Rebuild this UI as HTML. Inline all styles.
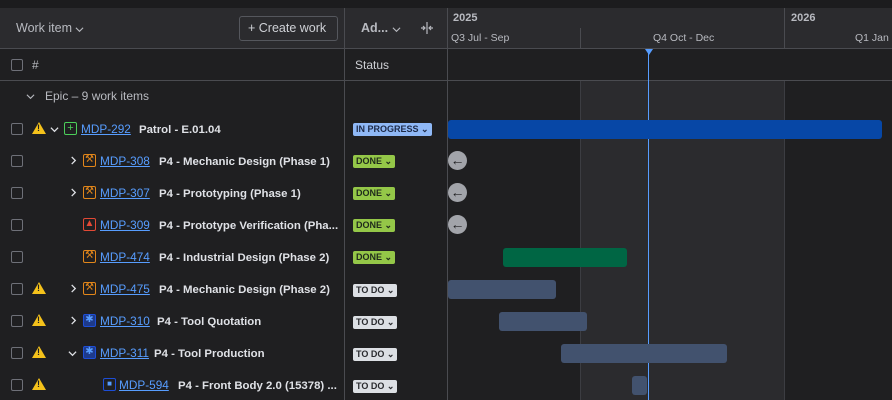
<!DOCTYPE html>
<html><head><meta charset="utf-8"><style>
*{box-sizing:border-box;margin:0;padding:0}
body{width:892px;height:400px;overflow:hidden;background:#1f1f21;font-family:"Liberation Sans",sans-serif;color:#cfd1d6;position:relative;font-size:12px}
.a{position:absolute}
.cb{position:absolute;left:11px;width:12px;height:12px;border:1.5px solid #6e7078;border-radius:2px}
.warn{position:absolute;left:32px;width:0;height:0;border-left:7px solid transparent;border-right:7px solid transparent;border-bottom:12px solid #f5c21b}
.warn:after{content:"!";position:absolute;left:-2px;top:1px;font-size:9px;font-weight:bold;color:#1f1f21}
.key{position:absolute;color:#579dff;text-decoration:underline;font-size:11.8px}
.ttl{position:absolute;color:#dfe1e6;font-weight:bold;font-size:11.4px;white-space:nowrap;margin-top:1px;line-height:15px}
.ic{position:absolute;width:13px;height:13px;border:1.3px solid;border-radius:2px}
.lz{position:absolute;font-size:9px;font-weight:bold;padding:0 3px;height:13px;line-height:13px;border-radius:2px;color:#1f2a1c}
.bar{position:absolute;border-radius:3px;height:19px}
.back{position:absolute;left:448px;width:19px;height:19px;border-radius:50%;background:#a2a4aa;color:#1f1f21;font-size:14px;line-height:18px;text-align:center}
svg.c{position:absolute;width:9px;height:9px}
</style></head><body>
<div class="a" style="left:0;top:0;width:892px;height:8px;background:#1c1c1e"></div>
<div class="a" style="left:0;top:8px;width:892px;height:40px;background:#2b2b2e"></div>
<div class="a" style="left:0;top:48px;width:892px;height:1px;background:#4a4b50"></div>
<div class="a" style="left:0;top:80px;width:892px;height:1px;background:#4a4b50"></div>
<div class="a" style="left:344px;top:8px;width:1px;height:392px;background:#4a4b50"></div>
<div class="a" style="left:447px;top:8px;width:1px;height:392px;background:#4a4b50"></div>
<div class="a" style="left:580px;top:28px;width:1px;height:20px;background:#4a4b50"></div>
<div class="a" style="left:784px;top:8px;width:1px;height:40px;background:#4a4b50"></div>
<div class="a" style="left:580px;top:81px;width:204px;height:319px;background:#2b2b2e"></div>
<div class="a" style="left:580px;top:81px;width:1px;height:319px;background:#3c3d42"></div>
<div class="a" style="left:784px;top:81px;width:1px;height:319px;background:#3c3d42"></div>

<div class="a" style="left:16px;top:21px;font-size:12.5px;color:#b8bac0">Work item</div>
<svg class="c" style="left:75px;top:25px" viewBox="0 0 10 10"><path d="M1 3l4 4 4-4" fill="none" stroke="#b8bac0" stroke-width="1.2"/></svg>
<div class="a" style="left:239px;top:16px;width:99px;height:25px;border:1px solid #55575d;border-radius:3px;font-size:12.5px;line-height:23px;padding-left:8px;color:#cfd1d6">+ Create work</div>
<div class="a" style="left:361px;top:21px;font-size:12.5px;color:#b8bac0;font-weight:bold">Ad...</div>
<svg class="c" style="left:392px;top:25px" viewBox="0 0 10 10"><path d="M1 3l4 4 4-4" fill="none" stroke="#b8bac0" stroke-width="1.2"/></svg>
<svg class="a" style="left:420px;top:21px" width="14" height="14" viewBox="0 0 14 14"><path d="M7 1v12M1 7h4M3 5l2 2-2 2M13 7h-4M11 5l-2 2 2 2" fill="none" stroke="#b8bac0" stroke-width="1.2"/></svg>
<div class="a" style="left:453px;top:12px;font-size:11px;font-weight:bold;color:#b8bac0">2025</div>
<div class="a" style="left:791px;top:12px;font-size:11px;font-weight:bold;color:#b8bac0">2026</div>
<div class="a" style="left:451px;top:32px;font-size:10.5px;color:#b8bac0">Q3 Jul - Sep</div>
<div class="a" style="left:653px;top:32px;font-size:10.5px;color:#b8bac0">Q4 Oct - Dec</div>
<div class="a" style="left:855px;top:32px;font-size:10.5px;color:#b8bac0;white-space:nowrap">Q1 Jan -</div>

<div class="cb" style="top:59px"></div>
<div class="a" style="left:32px;top:58px;font-size:12px;color:#b8bac0">#</div>
<div class="a" style="left:355px;top:58px;font-size:12px;color:#cfd1d6">Status</div>
<div class="a" style="left:645px;top:49px;width:0;height:0;border-left:4px solid transparent;border-right:4px solid transparent;border-top:6px solid #579dff"></div>
<div class="a" style="left:648px;top:49px;width:1px;height:351px;background:#579dff"></div>

<svg class="c" style="left:26px;top:92px" viewBox="0 0 10 10"><path d="M1 3l4 4 4-4" fill="none" stroke="#b8bac0" stroke-width="1.2"/></svg>
<div class="a" style="left:45px;top:89px;font-size:12px;color:#b8bac0">Epic – 9 work items</div>

<div class="cb" style="top:123px"></div><div class="warn" style="top:122px"></div>
<svg class="c" style="left:50px;top:125px" viewBox="0 0 10 10"><path d="M1 3l4 4 4-4" fill="none" stroke="#dfe1e6" stroke-width="1.4"/></svg>
<div class="ic" style="left:64px;top:122px;border-color:#4bce5a;color:#4bce5a;font-size:11px;line-height:10px;text-align:center">+</div>
<div class="key" style="left:81px;top:122px">MDP-292</div><div class="ttl" style="left:139px;top:122px">Patrol - E.01.04</div>
<div class="lz" style="left:353px;top:123px;background:#8fb8f6;color:#1d2a48">IN PROGRESS ⌄</div>
<div class="bar" style="left:448px;top:120px;width:434px;background:#0747a6"></div>

<div class="cb" style="top:155px"></div>
<svg class="c" style="left:69px;top:156px" viewBox="0 0 10 10"><path d="M3 1l4 4-4 4" fill="none" stroke="#dfe1e6" stroke-width="1.4"/></svg>
<div class="ic" style="left:83px;top:154px;border-color:#e2861a;color:#e2861a;font-size:10px;line-height:10px;text-align:center">⚒</div>
<div class="key" style="left:100px;top:154px">MDP-308</div><div class="ttl" style="left:159px;top:154px">P4 - Mechanic Design (Phase 1)</div>
<div class="lz" style="left:353px;top:155px;background:#94c748">DONE ⌄</div>
<div class="back" style="top:151px">←</div>

<div class="cb" style="top:187px"></div>
<svg class="c" style="left:69px;top:188px" viewBox="0 0 10 10"><path d="M3 1l4 4-4 4" fill="none" stroke="#dfe1e6" stroke-width="1.4"/></svg>
<div class="ic" style="left:83px;top:186px;border-color:#e2861a;color:#e2861a;font-size:10px;line-height:10px;text-align:center">⚒</div>
<div class="key" style="left:100px;top:186px">MDP-307</div><div class="ttl" style="left:159px;top:186px">P4 - Prototyping (Phase 1)</div>
<div class="lz" style="left:353px;top:187px;background:#94c748">DONE ⌄</div>
<div class="back" style="top:183px">←</div>

<div class="cb" style="top:219px"></div>
<div class="ic" style="left:83px;top:218px;border-color:#e34935;color:#e34935;font-size:10px;line-height:10px;text-align:center">▲</div>
<div class="key" style="left:100px;top:218px">MDP-309</div><div class="ttl" style="left:159px;top:218px">P4 - Prototype Verification (Pha...</div>
<div class="lz" style="left:353px;top:219px;background:#94c748">DONE ⌄</div>
<div class="back" style="top:215px">←</div>

<div class="cb" style="top:251px"></div>
<div class="ic" style="left:83px;top:250px;border-color:#e2861a;color:#e2861a;font-size:10px;line-height:10px;text-align:center">⚒</div>
<div class="key" style="left:100px;top:250px">MDP-474</div><div class="ttl" style="left:159px;top:250px">P4 - Industrial Design (Phase 2)</div>
<div class="lz" style="left:353px;top:251px;background:#94c748">DONE ⌄</div>
<div class="bar" style="left:503px;top:248px;width:124px;background:#006644"></div>

<div class="cb" style="top:283px"></div><div class="warn" style="top:282px"></div>
<svg class="c" style="left:69px;top:284px" viewBox="0 0 10 10"><path d="M3 1l4 4-4 4" fill="none" stroke="#dfe1e6" stroke-width="1.4"/></svg>
<div class="ic" style="left:83px;top:282px;border-color:#e2861a;color:#e2861a;font-size:10px;line-height:10px;text-align:center">⚒</div>
<div class="key" style="left:100px;top:282px">MDP-475</div><div class="ttl" style="left:159px;top:282px">P4 - Mechanic Design (Phase 2)</div>
<div class="lz" style="left:353px;top:284px;background:#dcdfe4;color:#292a2e">TO DO ⌄</div>
<div class="bar" style="left:448px;top:280px;width:108px;background:#42526e"></div>

<div class="cb" style="top:315px"></div><div class="warn" style="top:314px"></div>
<svg class="c" style="left:69px;top:316px" viewBox="0 0 10 10"><path d="M3 1l4 4-4 4" fill="none" stroke="#dfe1e6" stroke-width="1.4"/></svg>
<div class="ic" style="left:83px;top:314px;border-color:#1d4ed8;background:#1e3a8a;color:#579dff;font-size:10px;line-height:10px;text-align:center">✱</div>
<div class="key" style="left:100px;top:314px">MDP-310</div><div class="ttl" style="left:157px;top:314px">P4 - Tool Quotation</div>
<div class="lz" style="left:353px;top:316px;background:#dcdfe4;color:#292a2e">TO DO ⌄</div>
<div class="bar" style="left:499px;top:312px;width:88px;background:#42526e"></div>

<div class="cb" style="top:347px"></div><div class="warn" style="top:346px"></div>
<svg class="c" style="left:68px;top:349px" viewBox="0 0 10 10"><path d="M1 3l4 4 4-4" fill="none" stroke="#dfe1e6" stroke-width="1.4"/></svg>
<div class="ic" style="left:83px;top:346px;border-color:#1d4ed8;background:#1e3a8a;color:#579dff;font-size:10px;line-height:10px;text-align:center">✱</div>
<div class="key" style="left:100px;top:346px">MDP-311</div><div class="ttl" style="left:154px;top:346px">P4 - Tool Production</div>
<div class="lz" style="left:353px;top:348px;background:#dcdfe4;color:#292a2e">TO DO ⌄</div>
<div class="bar" style="left:561px;top:344px;width:166px;background:#42526e"></div>

<div class="cb" style="top:379px"></div><div class="warn" style="top:378px"></div>
<div class="ic" style="left:103px;top:378px;border-color:#1d4ed8;color:#579dff;font-size:8px;line-height:10px;text-align:center">■</div>
<div class="key" style="left:119px;top:378px">MDP-594</div><div class="ttl" style="left:178px;top:378px">P4 - Front Body 2.0 (15378) ...</div>
<div class="lz" style="left:353px;top:380px;background:#dcdfe4;color:#292a2e">TO DO ⌄</div>
<div class="bar" style="left:632px;top:376px;width:15px;background:#42526e"></div>
</body></html>
